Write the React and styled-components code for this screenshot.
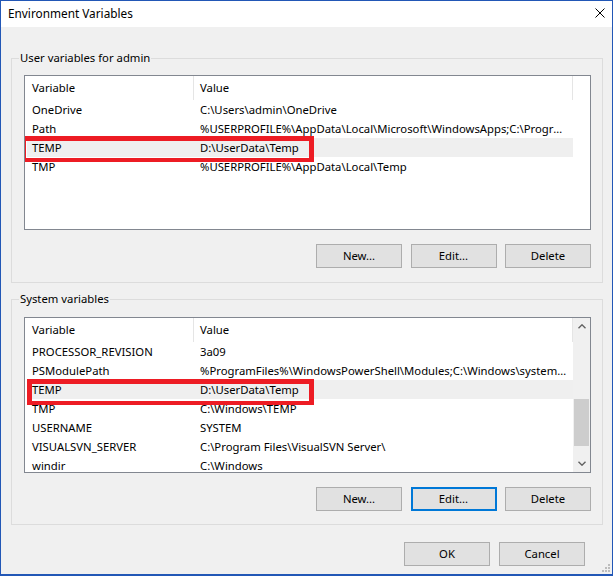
import React from 'react';
import styled, { createGlobalStyle } from 'styled-components';

const GlobalStyle = createGlobalStyle`
  html, body {
    margin: 0;
    padding: 0;
    background: #ffffff;
  }

  * {
    box-sizing: border-box;
  }
`;

const FONT = `'Noto Sans', 'Open Sans', sans-serif`;

const StyledWindow = styled.div`
  position: relative;
  width: 613px;
  height: 576px;
  border: 1px solid #2257b6;
  border-bottom-width: 2px;
  background: #f0f0f0;
  display: flex;
  flex-direction: column;
  font-family: ${FONT};
  font-size: 11.3px;
  color: #000;
  overflow: hidden;
`;

const TitleBar = styled.div`
  height: 26px;
  flex: none;
  background: #fff;
  display: flex;
  align-items: center;
  justify-content: space-between;
  padding: 0 7px 2px 7px;

  .title {
    font-size: 11.8px;
  }

  svg {
    display: block;
  }
`;

const Body = styled.div`
  flex: 1;
  display: flex;
  flex-direction: column;
  padding: 23px 9px 0 10px;
`;

const Group = styled.fieldset`
  margin: ${({ $gap }) => $gap}px 0 0 0;
  min-width: 0;
  border: 1px solid #dcdcdc;
  padding: ${({ $top }) => $top}px 11px ${({ $bottom }) => $bottom}px 12px;

  legend {
    margin-left: -5px;
    padding: 0 1px;
    line-height: 16px;
  }
`;

const List = styled.div`
  position: relative;
  height: ${({ $height }) => $height}px;
  border: 1px solid #828790;
  background: #fff;
  display: flex;
  overflow: hidden;
`;

const ListBody = styled.div`
  flex: 1;
  min-width: 0;
  display: flex;
  flex-direction: column;
`;

const Header = styled.div`
  height: 24px;
  flex: none;
  display: flex;
`;

const HeaderCell = styled.div`
  width: ${({ $width }) => $width}px;
  flex: none;
  padding-left: ${({ $pad }) => $pad}px;
  border-right: 1px solid #e5e5e5;
  line-height: 24px;
  white-space: nowrap;
`;

const Row = styled.div`
  height: 19px;
  flex: none;
  margin-left: 2px;
  width: 546px;
  display: grid;
  grid-template-columns: 167px 379px;
  line-height: 19px;
  background: ${({ $selected }) => ($selected ? '#efefef' : 'transparent')};
`;

const Cell = styled.div`
  padding-left: ${({ $pad }) => $pad}px;
  padding-right: 6px;
  white-space: nowrap;
  overflow: hidden;
  text-overflow: ellipsis;
`;

const Highlight = styled.div`
  position: absolute;
  left: ${({ $left }) => $left}px;
  top: ${({ $top }) => $top}px;
  width: ${({ $width }) => $width}px;
  height: 26px;
  border: 5px solid #ed1c24;
  border-bottom-width: 4px;
  pointer-events: none;
`;

const ScrollBar = styled.div`
  width: 17px;
  flex: none;
  background: #f0f0f0;
  display: flex;
  flex-direction: column;
`;

const ScrollArrow = styled.div`
  height: 17px;
  flex: none;
  display: flex;
  align-items: center;
  justify-content: center;
`;

const ScrollTrack = styled.div`
  flex: 1;
  padding-top: ${({ $offset }) => $offset}px;
`;

const ScrollThumb = styled.div`
  height: ${({ $size }) => $size}px;
  margin: 0 1px;
  background: #cdcdcd;
`;

const ButtonRow = styled.div`
  display: flex;
  justify-content: flex-end;
  gap: 8.5px;
  margin-top: 14px;
`;

const Button = styled.button`
  width: 86px;
  height: 24px;
  padding: 0;
  border: ${({ $focused }) => ($focused ? '2px solid #0078d7' : '1px solid #adadad')};
  background: #e1e1e1;
  font-family: ${FONT};
  font-size: 11.3px;
  color: #000;
  line-height: 20px;
`;

const Footer = styled.div`
  display: flex;
  justify-content: flex-end;
  gap: 9px;
  margin-top: 17px;
  padding-right: 18px;
`;

const Grip = styled.svg`
  position: absolute;
  right: 1px;
  bottom: 1px;
`;

const userVars = [
  ['OneDrive', 'C:\\Users\\admin\\OneDrive'],
  ['Path', '%USERPROFILE%\\AppData\\Local\\Microsoft\\WindowsApps;C:\\Program Files\\nodejs'],
  ['TEMP', 'D:\\UserData\\Temp', true],
  ['TMP', '%USERPROFILE%\\AppData\\Local\\Temp'],
];

const systemVars = [
  ['PROCESSOR_REVISION', '3a09'],
  ['PSModulePath', '%ProgramFiles%\\WindowsPowerShell\\Modules;C:\\Windows\\system32\\WindowsPowerShell'],
  ['TEMP', 'D:\\UserData\\Temp', true],
  ['TMP', 'C:\\Windows\\TEMP'],
  ['USERNAME', 'SYSTEM'],
  ['VISUALSVN_SERVER', 'C:\\Program Files\\VisualSVN Server\\'],
  ['windir', 'C:\\Windows'],
];

const Chevron = ({ down }) => (
  <svg width="8" height="5" viewBox="0 0 8 5">
    <path
      d={down ? 'M0.5 0.8 L4 4.2 L7.5 0.8' : 'M0.5 4.2 L4 0.8 L7.5 4.2'}
      fill="none"
      stroke="#606060"
      strokeWidth="1.4"
    />
  </svg>
);

const VarList = ({ rows, height, scroll, highlight }) => (
  <List $height={height}>
    <ListBody>
      <Header>
        <HeaderCell $width={169} $pad={7}>
          Variable
        </HeaderCell>
        <HeaderCell $width={379} $pad={6}>
          Value
        </HeaderCell>
      </Header>
      {rows.map(([name, value, selected]) => (
        <Row key={name} $selected={selected}>
          <Cell $pad={5}>{name}</Cell>
          <Cell $pad={6}>{value}</Cell>
        </Row>
      ))}
    </ListBody>
    {scroll && (
      <ScrollBar>
        <ScrollArrow>
          <Chevron />
        </ScrollArrow>
        <ScrollTrack $offset={64}>
          <ScrollThumb $size={47} />
        </ScrollTrack>
        <ScrollArrow>
          <Chevron down />
        </ScrollArrow>
      </ScrollBar>
    )}
    <Highlight $left={highlight.left} $top={highlight.top} $width={highlight.width} />
  </List>
);

const App = () => (
  <>
    <GlobalStyle />
    <StyledWindow>
      <TitleBar>
        <span className="title">Environment Variables</span>
        <svg width="10" height="10" viewBox="0 0 10 10">
          <path d="M0.5 0.5 L9.5 9.5 M9.5 0.5 L0.5 9.5" stroke="#000" strokeWidth="1" />
        </svg>
      </TitleBar>

      <Body>
        <Group $gap={0} $top={9} $bottom={14}>
          <legend>User variables for admin</legend>
          <VarList rows={userVars} height={155} highlight={{ left: -4, top: 60, width: 293 }} />
          <ButtonRow>
            <Button>New...</Button>
            <Button>Edit...</Button>
            <Button>Delete</Button>
          </ButtonRow>
        </Group>

        <Group $gap={8} $top={10} $bottom={13}>
          <legend>System variables</legend>
          <VarList
            rows={systemVars}
            height={156}
            scroll
            highlight={{ left: 2, top: 61, width: 287 }}
          />
          <ButtonRow>
            <Button>New...</Button>
            <Button $focused>Edit...</Button>
            <Button>Delete</Button>
          </ButtonRow>
        </Group>

        <Footer>
          <Button>OK</Button>
          <Button>Cancel</Button>
        </Footer>
      </Body>

      <Grip width="10" height="10" viewBox="0 0 10 10">
        <g fill="#bcbcbc">
          <rect x="7" y="1" width="2" height="2" />
          <rect x="4" y="4" width="2" height="2" />
          <rect x="7" y="4" width="2" height="2" />
          <rect x="1" y="7" width="2" height="2" />
          <rect x="4" y="7" width="2" height="2" />
          <rect x="7" y="7" width="2" height="2" />
        </g>
      </Grip>
    </StyledWindow>
  </>
);

export default App;
